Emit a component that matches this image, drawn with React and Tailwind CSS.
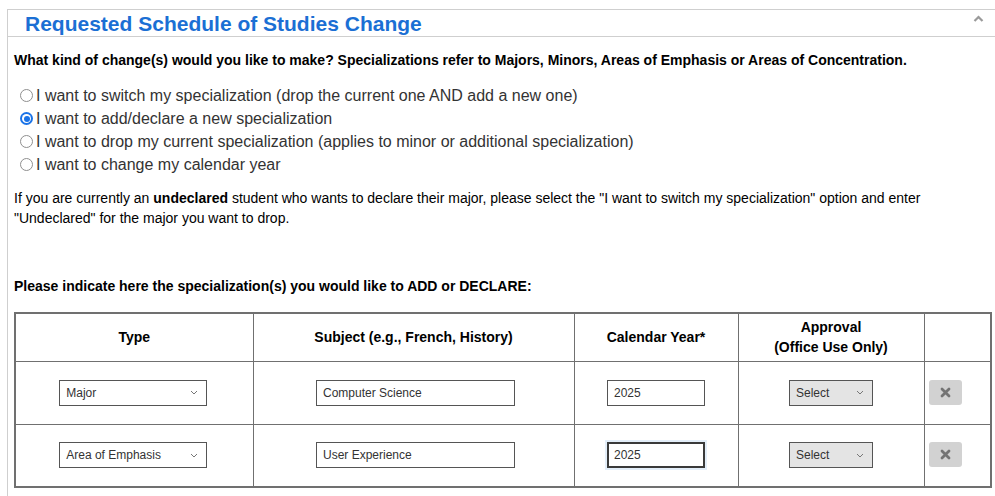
import React from "react";

const font = { fontFamily: '"Liberation Sans", Arial, Helvetica, sans-serif' };

function Radio({ checked, label }) {
  return (
    <label className="flex items-center h-[23px] text-[16px] text-[#333]">
      {checked ? (
        <span className="ml-[6px] mr-[3px] w-[13px] h-[13px] rounded-full bg-[#1a73e8] flex items-center justify-center">
          <span className="w-[9px] h-[9px] rounded-full bg-white flex items-center justify-center">
            <span className="w-[6px] h-[6px] rounded-full bg-[#1a73e8]" />
          </span>
        </span>
      ) : (
        <span className="ml-[6px] mr-[3px] w-[13px] h-[13px] rounded-full border-[1.5px] border-[#8f8f8f] bg-white" />
      )}
      <span>{label}</span>
    </label>
  );
}

function Chevron() {
  return (
    <svg width="8" height="5" viewBox="0 0 8 5">
      <path d="M1 1 L4 4 L7 1" fill="none" stroke="#777" strokeWidth="1" />
    </svg>
  );
}

function FakeSelect({ value, width, gray }) {
  return (
    <div
      className={`h-[26px] border border-[#555] flex items-center justify-between pl-[6px] pr-[8px] text-[12px] text-[#333] ${gray ? "bg-[#e4e4e4]" : "bg-white"}`}
      style={{ width }}
    >
      <span>{value}</span>
      <Chevron />
    </div>
  );
}

function FakeInput({ value, width, focused }) {
  return (
    <div
      className={`h-[26px] flex items-center text-[12px] text-[#333] bg-white ${focused ? "border-2 border-[#3a3a3a] shadow-[0_0_0_2px_#e3eef9] pl-[5px]" : "border border-[#555] pl-[6px]"}`}
      style={{ width }}
    >
      {value}
    </div>
  );
}

function DeleteBtn() {
  return (
    <div className="w-[33px] h-[25px] rounded-[3px] bg-[#d2d2d2] flex items-center justify-center">
      <svg width="11" height="11" viewBox="0 0 11 11">
        <path d="M2 2 L9 9 M9 2 L2 9" stroke="#747474" strokeWidth="2.8" strokeLinecap="round" />
      </svg>
    </div>
  );
}

function Row({ type, subject, year, focused }) {
  return (
    <tr className="h-[63px]">
      <td className="border border-[#707070] align-middle">
        <div className="flex justify-center pr-[2px]">
          <FakeSelect value={type} width={148} />
        </div>
      </td>
      <td className="border border-[#707070] align-middle">
        <div className="flex justify-center pl-[4px]">
          <FakeInput value={subject} width={199} />
        </div>
      </td>
      <td className="border border-[#707070] align-middle">
        <div className="flex justify-center">
          <FakeInput value={year} width={98} focused={focused} />
        </div>
      </td>
      <td className="border border-[#707070] align-middle">
        <div className="flex justify-center">
          <FakeSelect value="Select" width={84} gray />
        </div>
      </td>
      <td className="border border-[#707070] align-middle">
        <div className="flex pl-[4px] pb-[1px]">
          <DeleteBtn />
        </div>
      </td>
    </tr>
  );
}

export default function App() {
  return (
    <div className="w-[995px] h-[496px] bg-white overflow-hidden" style={font}>
      <div className="mt-[9px] ml-[7px] border-l border-t border-[#cfcfcf] h-[600px]">
        <div className="h-[27px] border-b border-[#cfcfcf] flex items-center justify-between pl-[17px] pr-[11px]">
          <h1 className="text-[21px] font-bold text-[#1b6fd4] leading-none">
            Requested Schedule of Studies Change
          </h1>
          <svg width="11" height="7" viewBox="0 0 11 7" className="mt-[-10px]">
            <path d="M1.5 6 L5.5 2 L9.5 6" fill="none" stroke="#9a9a9a" strokeWidth="2.2" />
          </svg>
        </div>
        <div className="pl-[6px] pr-[4px]">
          <p className="mt-[14px] text-[14px] font-bold text-black leading-[18px]">
            What kind of change(s) would you like to make? Specializations refer to Majors, Minors, Areas of Emphasis or Areas of Concentration.
          </p>
          <div className="mt-[15px] flex flex-col">
            <Radio label="I want to switch my specialization (drop the current one AND add a new one)" />
            <Radio checked label="I want to add/declare a new specialization" />
            <Radio label="I want to drop my current specialization (applies to minor or additional specialization)" />
            <Radio label="I want to change my calendar year" />
          </div>
          <p className="mt-[12px] text-[14px] text-black leading-[20px] w-[976px]">
            If you are currently an <b>undeclared</b> student who wants to declare their major, please select the "I want to switch my specialization" option and enter "Undeclared" for the major you want to drop.
          </p>
          <p className="mt-[49px] text-[14px] font-bold text-black leading-[18px]">
            Please indicate here the specialization(s) you would like to ADD or DECLARE:
          </p>
          <table className="mt-[17px] w-[976px] table-fixed border-collapse border-2 border-[#707070] text-[14px]">
            <colgroup>
              <col className="w-[238px]" />
              <col className="w-[321px]" />
              <col className="w-[164px]" />
              <col className="w-[186px]" />
              <col className="w-[67px]" />
            </colgroup>
            <thead>
              <tr className="h-[48px]">
                <th className="border border-[#707070] font-bold text-center leading-[20px]">Type</th>
                <th className="border border-[#707070] font-bold text-center leading-[20px]">Subject (e.g., French, History)</th>
                <th className="border border-[#707070] font-bold text-center leading-[20px]">Calendar Year*</th>
                <th className="border border-[#707070] font-bold text-center leading-[20px]">
                  Approval
                  <br />
                  (Office Use Only)
                </th>
                <th className="border border-[#707070]"></th>
              </tr>
            </thead>
            <tbody>
              <Row type="Major" subject="Computer Science" year="2025" />
              <Row type="Area of Emphasis" subject="User Experience" year="2025" focused />
            </tbody>
          </table>
        </div>
      </div>
    </div>
  );
}
